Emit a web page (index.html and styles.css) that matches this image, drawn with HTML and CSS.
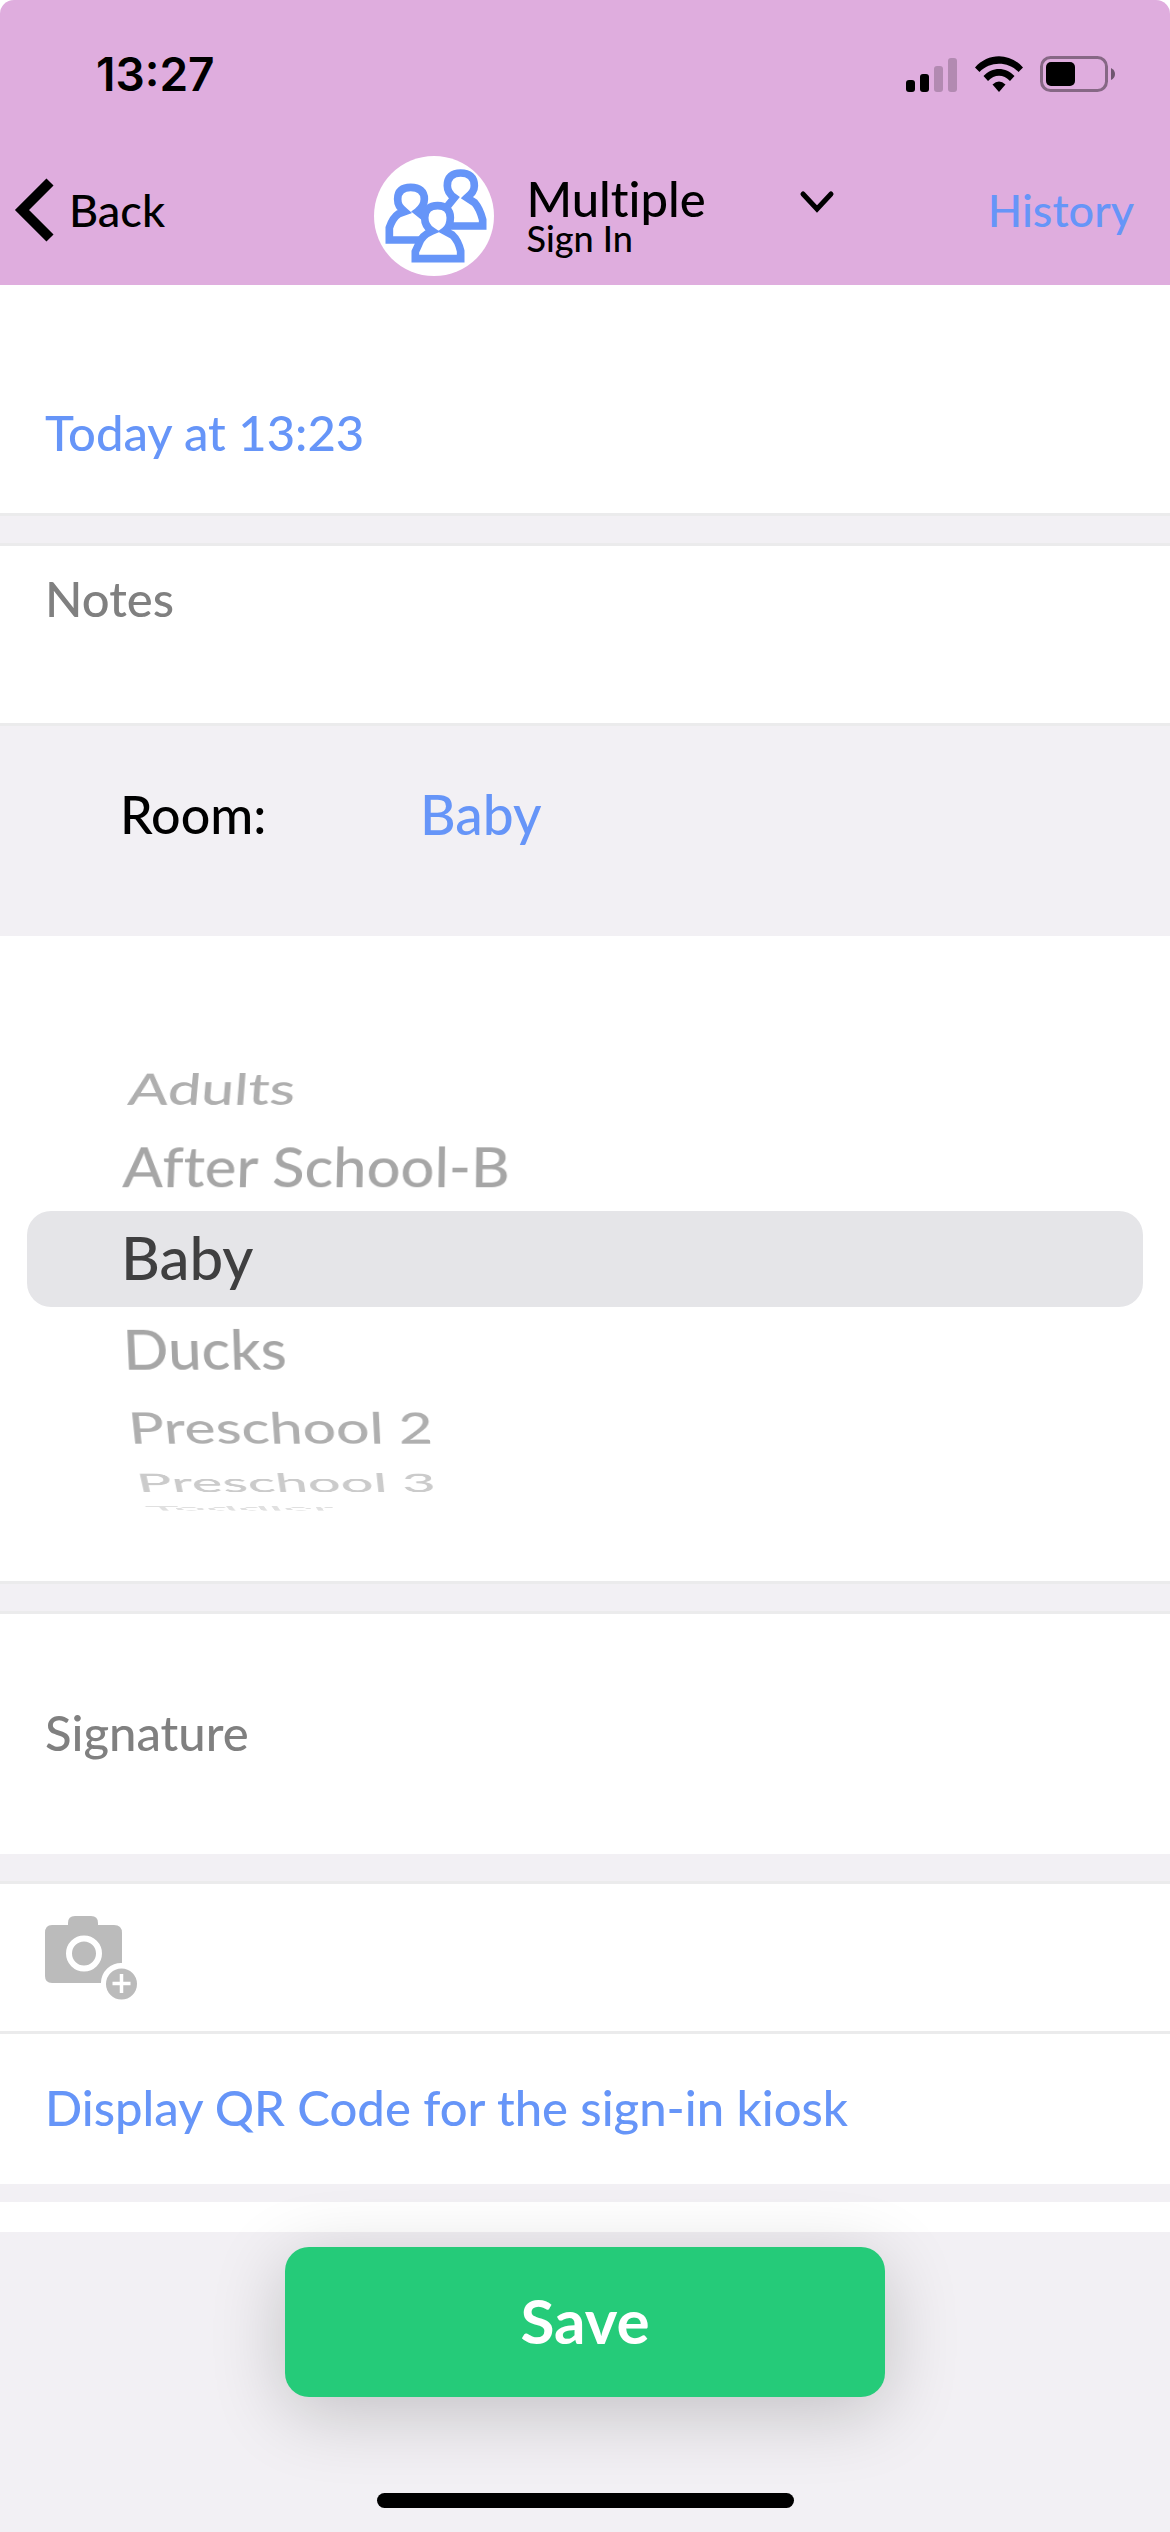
FILE: index.html
```html
<!DOCTYPE html>
<html lang="en">
<head>
<meta charset="utf-8">
<meta name="viewport" content="width=device-width, initial-scale=1">
<title>Multiple Sign In</title>
<link rel="stylesheet" href="styles.css">
</head>
<body>
<div class="screen">
  <header class="header">
    <div class="status">
      <time class="clock">13:27</time>
      <div class="indicators">
        <svg width="52" height="36" viewBox="0 0 52 36" aria-label="Signal">
          <rect x="0" y="24" width="9" height="12" rx="3"/>
          <rect x="14" y="18" width="9" height="18" rx="3"/>
          <rect x="28" y="10" width="9" height="26" rx="3" opacity=".2"/>
          <rect x="42" y="2" width="9" height="34" rx="3" opacity=".2"/>
        </svg>
        <svg width="48" height="36" viewBox="0 0 48 36" aria-label="Wi-Fi">
          <path d="M0 11.500C13-3.500 35-3.500 48 11.500L43.500 16C33 5 15 5 4.500 16Z"/>
          <path d="M8.500 20C17 10.500 31 10.500 39.500 20L35 25C28.500 18 19.500 18 13 25Z"/>
          <path d="M17.500 28.500Q24 22.500 30.500 28.500L24 36Z"/>
        </svg>
        <svg width="76" height="36" viewBox="0 0 76 36" aria-label="Battery">
          <rect x="1.500" y="1.500" width="65" height="33" rx="9" fill="none" stroke="#000" stroke-width="3" opacity=".4"/>
          <rect x="6" y="6" width="29" height="24" rx="5"/>
          <path d="M71 12Q75 14 75 18T71 24Z" opacity=".5"/>
        </svg>
      </div>
    </div>
    <nav class="nav">
      <a class="back" href="#back">
        <svg width="40" height="64" viewBox="0 0 40 64" aria-hidden="true"><path d="M35 4L7 32L35 60" fill="none" stroke="#000" stroke-width="10"/></svg>
        Back
      </a>
      <button class="group" type="button">
        <svg class="avatar" width="120" height="120" viewBox="45 33 360 360" aria-hidden="true">
          <circle cx="225" cy="213" r="180" fill="#fff"/>
          <g fill="#fff" stroke="#6695f8" stroke-width="23">
            <path d="M260 243H371V224C366 205 360 188 347 173L324 158C338 145 346 138 346 122C346 96 330 84 305 84C280 84 265 96 265 122C265 138 272 148 286 158L262 188"/>
            <path d="M180 285H91V248C98 228 106 215 118 207L137 200C122 187 116 180 116 162C116 138 130 127 155 127C182 127 196 140 196 162C196 180 188 190 175 200L200 220"/>
            <path d="M169 341H305V318C300 297 292 281 280 270L257 258C270 248 274 236 274 218C274 194 258 182 236 182C212 182 197 194 197 218C197 236 204 248 219 258C200 266 186 276 179 298L169 320Z"/>
          </g>
        </svg>
        <span class="titles">
          <span class="title">Multiple</span>
          <span class="subtitle">Sign In</span>
        </span>
        <svg class="chevron" width="34" height="22" viewBox="0 0 34 22" aria-hidden="true"><path d="M3 3L17 18L31 3" fill="none" stroke="#000" stroke-width="5" stroke-linecap="round"/></svg>
      </button>
      <a class="history" href="#history">History</a>
    </nav>
  </header>

  <main class="form">
    <section class="row when"><button class="link" type="button">Today at 13:23</button></section>
    <div class="gap lined-top lined-bottom"></div>
    <textarea class="notes" aria-label="Notes" placeholder="Notes"></textarea>
    <section class="room lined-top">
      <span class="room-label" id="room-label">Room:</span>
      <button class="room-value" type="button" aria-labelledby="room-label">Baby</button>
    </section>
    <section class="picker">
      <ul class="wheel" role="listbox" aria-labelledby="room-label">
        <li class="option above-2" role="option">Adults</li>
        <li class="option above-1" role="option">After School-B</li>
        <li class="option selected" role="option" aria-selected="true">Baby</li>
        <li class="option below-1" role="option">Ducks</li>
        <li class="option below-2" role="option">Preschool 2</li>
        <li class="option below-3" role="option">Preschool 3</li>
        <li class="option below-4" role="option">Toddler</li>
      </ul>
    </section>
    <div class="gap lined-top lined-bottom"></div>
    <section class="row signature"><button class="placeholder" type="button">Signature</button></section>
    <div class="gap medium lined-bottom"></div>
    <section class="row photo">
      <button class="camera" type="button" aria-label="Add photo">
        <svg width="78" height="84" viewBox="0 0 78 84" aria-hidden="true">
          <path fill="#bbb" d="M7 9H23V7Q23 0 30 0H46Q53 0 53 7V9H69Q77 9 77 17V47A20 20 0 0 0 56 67H7Q0 67 0 60V17Q0 9 7 9Z"/>
          <circle cx="39" cy="37.500" r="15" fill="#bbb" stroke="#fff" stroke-width="6"/>
          <circle cx="76.500" cy="68" r="20" fill="#fff"/>
          <circle cx="76.500" cy="68" r="15.500" fill="#bbb"/>
          <path d="M76.500 58V77M67.500 67.500H85.500" stroke="#fff" stroke-width="3.500"/>
        </svg>
      </button>
    </section>
    <section class="row qr lined-top"><a class="link" href="#qr">Display QR Code for the sign-in kiosk</a></section>
    <div class="gap small"></div>
    <div class="spacer"></div>
  </main>

  <footer class="footer">
    <button class="save" type="submit">Save</button>
    <div class="home-bar"></div>
  </footer>
</div>
</body>
</html>
```
FILE: styles.css
```css
* { box-sizing: border-box; }

body {
  margin: 0;
  background: #fff;
  color: #000;
  font-family: Lato, "Liberation Sans", sans-serif;
  font-size: 49px;
  font-weight: 500;
  font-variant-ligatures: none;
  line-height: 60px;
}

button {
  margin: 0;
  padding: 0;
  border: 0;
  background: none;
  color: inherit;
  font: inherit;
  font-variant-ligatures: none;
  text-align: left;
}

a { color: inherit; text-decoration: none; }
svg { display: block; overflow: visible; }

.screen {
  display: flex;
  flex-direction: column;
  min-height: 100vh;
}

.header {
  background: #dfadde;
  border-radius: 14px 14px 0 0;
  padding-bottom: 9px;
}

.status {
  display: flex;
  justify-content: space-between;
  padding: 44px 54px 0 96px;
  height: 156px;
}

.clock {
  font: 600 46px/60px Inter, sans-serif;
}

.indicators {
  display: flex;
  gap: 17px;
  padding-top: 12px;
}

.nav {
  display: grid;
  grid-template-columns: 6fr auto 5fr;
  align-items: center;
  height: 120px;
  padding: 0 36px 0 15px;
}

.back,
.history {
  display: flex;
  align-items: center;
  gap: 14px;
  padding-bottom: 12px;
  font-size: 45px;
}

.history {
  justify-self: end;
  color: #6695f8;
}

.group {
  display: flex;
  align-items: center;
}

.titles {
  display: flex;
  flex-direction: column;
  width: 276px;
  padding-left: 32px;
}

.title { line-height: 44px; }
.subtitle { font-size: 36px; line-height: 36px; }
.chevron { margin: 0 0 28px 30px; }

.row {
  display: flex;
  align-items: center;
  padding: 0 45px;
}

.link { color: #6695f8; }
.placeholder { color: #808080; }
.when { height: 228px; padding-top: 66px; }

.gap { height: 33px; background: #f2f0f4; }
.gap.medium { height: 30px; }
.gap.small { height: 18px; }
.lined-top { border-top: 3px solid #ebebec; }
.lined-bottom { border-bottom: 3px solid #ebebec; }

.notes {
  display: block;
  width: 100%;
  height: 177px;
  padding: 22px 45px;
  border: 0;
  resize: none;
  color: #000;
  font: inherit;
}

.notes::placeholder { color: #808080; opacity: 1; }

.room {
  display: grid;
  grid-template-columns: 300px 1fr;
  align-items: center;
  height: 213px;
  padding: 0 120px 34px;
  background: #f2f0f4;
}

.room-label { font-size: 52px; }
.room-value { color: #6695f8; font-size: 55px; }

.picker {
  display: flex;
  align-items: center;
  height: 645px;
  padding: 0 27px;
}

/* Every option lies on a cylinder of radius 268px, 20 degrees apart. */
.wheel {
  display: grid;
  flex: 1;
  margin: 0;
  padding: 0;
  border-radius: 24px;
  background: #e5e5e8;
  list-style: none;
  perspective: 3800px;
}

.option {
  grid-area: 1 / 1;
  padding: 0 94px 4px;
  color: #a6a6a6;
  font-size: 60px;
  line-height: 92px;
  transform-origin: 50% 50% -268px;
}

.selected { color: #3f3f40; }
.above-1 { transform: rotateX(20deg); }
.above-2 { transform: rotateX(40deg); color: #afafaf; }
.below-1 { transform: rotateX(-20deg); }
.below-2 { transform: rotateX(-40deg); color: #afafaf; }
.below-3 { transform: rotateX(-60deg); color: #cbcbcb; }
.below-4 { transform: rotateX(-80deg); color: #e0e0e0; }

.signature { height: 240px; padding-bottom: 4px; }
.photo { height: 147px; }
.qr { height: 153px; padding-bottom: 4px; }
.spacer { height: 30px; }

.footer {
  display: flex;
  flex: 1;
  flex-direction: column;
  align-items: center;
  justify-content: space-between;
  padding: 15px 0 24px;
  background: #f2f0f4;
}

.save {
  width: 600px;
  max-width: 90%;
  height: 150px;
  margin-bottom: 96px;
  padding-bottom: 4px;
  border-radius: 24px;
  background: #25cb79;
  box-shadow: 0 15px 75px rgba(0, 0, 0, 0.2);
  color: #fff;
  font-size: 62px;
  font-weight: 700;
  text-align: center;
}

.home-bar {
  width: 417px;
  max-width: 60%;
  height: 15px;
  border-radius: 8px;
  background: #000;
}
```
